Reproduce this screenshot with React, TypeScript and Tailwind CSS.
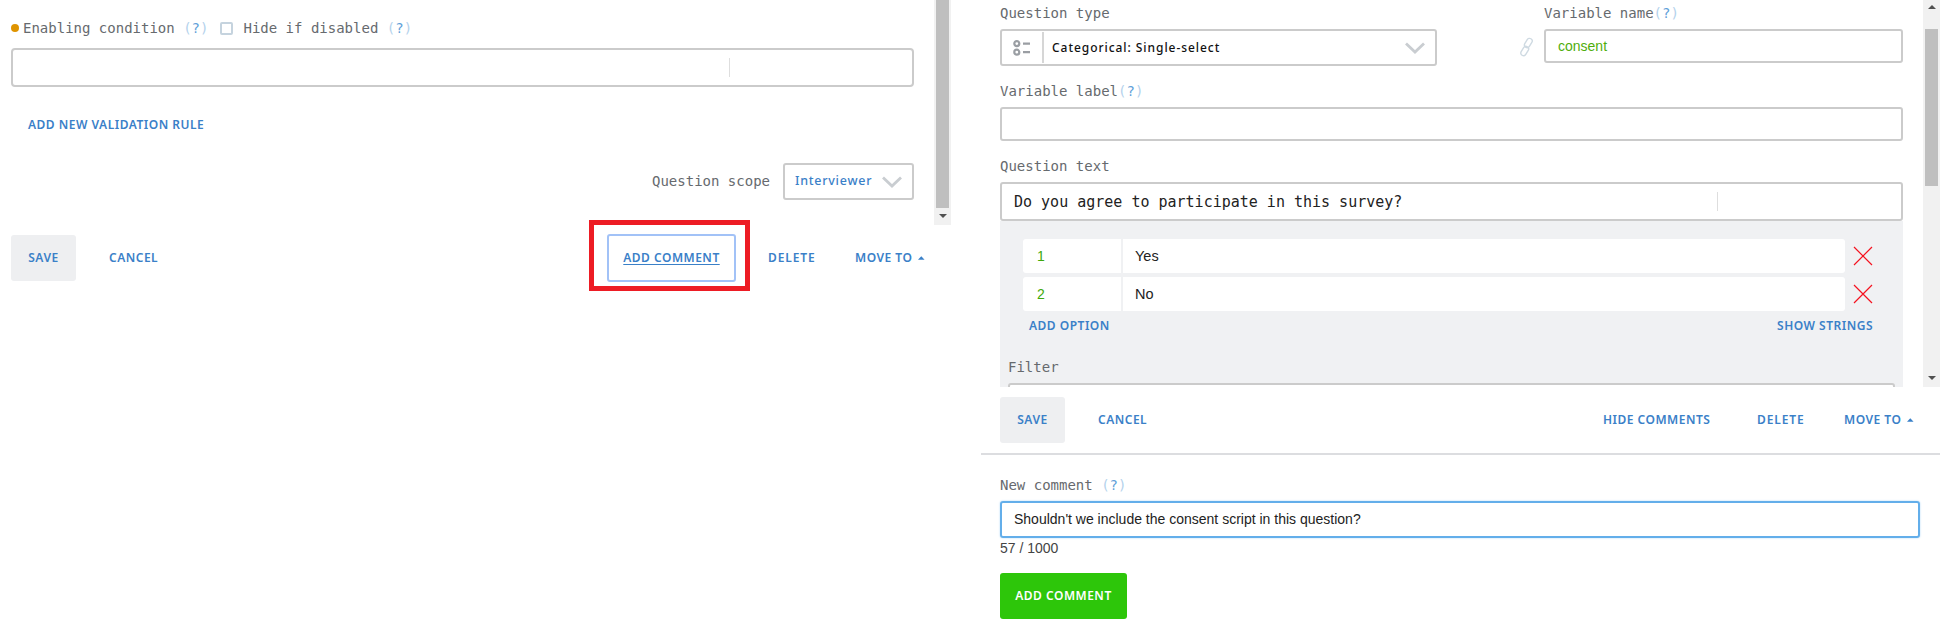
const mono = "font-['DejaVu_Sans_Mono','Liberation_Mono',monospace]";
const btnFont = "font-['Noto_Sans','Open_Sans',sans-serif]";
const arial = "font-['Liberation_Sans',Arial,sans-serif]";

function Help({ className = "" }: { className?: string }) {
  return <span className={`text-[#b4d2ec] ${className}`}>(<span className="text-[#5f9fd9]">?</span>)</span>;
}

function Label({ children, className = "" }: { children: React.ReactNode; className?: string }) {
  return <div className={`${mono} text-[14px] leading-[18px] text-[#666a6e] whitespace-pre ${className}`}>{children}</div>;
}

function TextBtn({ children, className = "" }: { children: React.ReactNode; className?: string }) {
  return <span className={`${btnFont} text-[12px] leading-[16px] font-semibold tracking-[0.5px] text-[#3a80c8] whitespace-nowrap ${className}`}>{children}</span>;
}

function Chevron() {
  return (
    <svg width="20" height="12" viewBox="0 0 20 12" fill="none" className="shrink-0">
      <path d="M1 1.5 L10 10 L19 1.5" stroke="#c9cdd1" strokeWidth="2.8" />
    </svg>
  );
}

function MoveTo() {
  return (
    <span className="flex items-center gap-[6px]">
      <TextBtn>MOVE TO</TextBtn>
      <svg width="8" height="4" viewBox="0 0 8 4"><path d="M0 4 L4 0 L8 4 Z" fill="#3a80c8" /></svg>
    </span>
  );
}

function SaveBtn() {
  return (
    <div className="w-[65px] h-[46px] rounded-[3px] bg-[#eeeff1] flex items-center justify-center">
      <TextBtn>SAVE</TextBtn>
    </div>
  );
}

function RedX() {
  return (
    <svg width="20" height="20" viewBox="0 0 20 20" className="shrink-0">
      <path d="M1 1 L19 19 M19 1 L1 19" stroke="#f5121f" strokeWidth="1.2" />
    </svg>
  );
}

function OptionRow({ n, text }: { n: string; text: string }) {
  return (
    <div className="flex items-center">
      <div className="w-[822px] h-[34px] bg-white rounded-[3px] flex items-center">
        <div className={`${arial} w-[100px] h-full pl-[14px] border-r-2 border-[#f0f1f3] flex items-center text-[14px] text-[#3fa90a]`}>{n}</div>
        <div className={`${arial} pl-[12px] pt-[1px] text-[14.5px] text-[#222]`}>{text}</div>
      </div>
      <div className="ml-[8px]"><RedX /></div>
    </div>
  );
}

function Scrollbar({ thumbH, showTop }: { thumbH: number; showTop: boolean }) {
  return (
    <div className="w-[17px] shrink-0 h-full bg-[#f1f1f1] flex flex-col items-center relative">
      {showTop && (
        <svg width="8" height="4" viewBox="0 0 8 4" className="absolute top-[5px]"><path d="M0 4 L4 0 L8 4 Z" fill="#505050" /></svg>
      )}
      <div className="w-[13px] bg-[#bfbfbf]" style={{ marginTop: showTop ? 29 : 0, height: thumbH }} />
      <svg width="8" height="4" viewBox="0 0 8 4" className="absolute bottom-[7px]"><path d="M0 0 L8 0 L4 4 Z" fill="#505050" /></svg>
    </div>
  );
}

export default function App() {
  return (
    <div className="w-[1955px] h-[639px] bg-white flex overflow-hidden">
      {/* Left pane */}
      <div className="w-[981px] shrink-0">
        <div className="w-[952px] h-[225px] flex overflow-hidden">
          <div className="w-[934px] pl-[11px] pr-[20px] shrink-0">
            <div className="flex items-center mt-[19px] h-[18px]">
              <span className="w-[8px] h-[8px] rounded-full bg-[#df9400] shrink-0 mr-[4px]" />
              <Label>Enabling condition <Help /></Label>
              <span className="w-[13px] h-[13px] border-2 border-[#c5d3de] rounded-[2px] ml-[12px] mr-[10px] shrink-0" />
              <Label>Hide if disabled <Help /></Label>
            </div>
            <div className="mt-[11px] h-[39px] border-2 border-[#cbcbcb] rounded-[4px] relative flex items-center">
              <div className="ml-[716px] w-px h-[19px] bg-[#dedede]" />
            </div>
            <div className="mt-[30px] pl-[17px] h-[16px] flex items-center">
              <TextBtn>ADD NEW VALIDATION RULE</TextBtn>
            </div>
            <div className="mt-[30px] flex items-center justify-end">
              <Label className="mr-[13px] -mt-[1px]">Question scope</Label>
              <div className="w-[131px] h-[37px] border-2 border-[#cbcbcb] rounded-[3px] flex items-center justify-between pl-[10px] pr-[10px]">
                <span className={`${btnFont} text-[12.5px] tracking-[0.75px] font-medium text-[#3a80c8]`}>Interviewer</span>
                <Chevron />
              </div>
            </div>
          </div>
          <Scrollbar thumbH={208} showTop={false} />
        </div>
        <div className="mt-[9px] w-[914px] ml-[11px] flex items-center">
          <SaveBtn />
          <TextBtn className="ml-[33px]">CANCEL</TextBtn>
          <div className="ml-auto flex items-center">
            <div className="relative w-[129px] h-[48px] border-2 border-[#a2c2f7] rounded-[3px] flex items-center justify-center">
              <TextBtn className="text-[#2c4f72] underline underline-offset-2">ADD COMMENT</TextBtn>
              <div className="absolute left-[-20px] top-[-16px] w-[161px] h-[71px] border-[5px] border-[#ed1c24]" />
            </div>
            <div className="ml-[32px] w-[48px] flex"><TextBtn className="tracking-[0.9px]">DELETE</TextBtn></div>
            <div className="ml-[39px] w-[70px]"><MoveTo /></div>
          </div>
        </div>
      </div>

      {/* Right pane */}
      <div className="w-[959px] shrink-0">
        <div className="h-[387px] flex overflow-hidden">
          <div className="w-[942px] shrink-0 pl-[19px] pr-[20px] overflow-hidden">
            <div className="flex">
              <div className="w-[437px]">
                <Label className="mt-[4px]">Question type</Label>
                <div className="mt-[7px] h-[37px] border-2 border-[#cbcbcb] rounded-[3px] flex items-center">
                  <div className="w-[42px] h-[31px] border-r-2 border-[#d6d6d6] flex items-center justify-center">
                    <svg width="18" height="16" viewBox="0 0 18 16" fill="none">
                      <circle cx="3.8" cy="3.6" r="2.5" stroke="#9a9ea3" strokeWidth="2.2" />
                      <circle cx="3.8" cy="12.2" r="2.5" stroke="#9a9ea3" strokeWidth="2.2" />
                      <path d="M10 3.6 H17 M10 12.2 H17" stroke="#9a9ea3" strokeWidth="2.2" />
                    </svg>
                  </div>
                  <span className={`${btnFont} ml-[8px] text-[12px] font-medium tracking-[0.95px] text-[#111]`}>Categorical: Single-select</span>
                  <div className="ml-auto mr-[10px]"><Chevron /></div>
                </div>
              </div>
              <div className="ml-[82px] w-[15px] mt-[37px] shrink-0">
                <svg width="15" height="20" viewBox="0 0 15 20" fill="none" stroke="#cfdae2" strokeWidth="1.4">
                  <rect x="6.6" y="1" width="5.4" height="10" rx="2.7" transform="rotate(32 9.3 6)" />
                  <rect x="3" y="9" width="5.4" height="10" rx="2.7" transform="rotate(32 5.7 14)" />
                </svg>
              </div>
              <div className="ml-[10px] w-[359px]">
                <Label className="mt-[4px]">Variable name<Help /></Label>
                <div className="mt-[7px] h-[34px] border-2 border-[#cbcbcb] rounded-[3px] flex items-center pl-[12px]">
                  <span className={`${arial} text-[14px] text-[#4fae0c]`}>consent</span>
                </div>
              </div>
            </div>
            <Label className="mt-[16px]">Variable label<Help /></Label>
            <div className="mt-[7px] h-[34px] border-2 border-[#cbcbcb] rounded-[3px]" />
            <Label className="mt-[16px]">Question text</Label>
            <div className="mt-[7px] h-[39px] border-2 border-[#cbcbcb] rounded-[3px] flex items-center pl-[12px]">
              <span className={`${mono} pt-[1px] text-[15px] text-[#222] whitespace-pre`}>Do you agree to participate in this survey?</span>
              <div className="ml-auto mr-[183px] w-px h-[19px] bg-[#dedede]" />
            </div>
            <div className="h-[166px] bg-[#f0f1f3] overflow-hidden">
              <div className="pt-[18px] pl-[23px] flex flex-col gap-[4px]">
                <OptionRow n="1" text="Yes" />
                <OptionRow n="2" text="No" />
              </div>
              <div className="mt-[7px] pl-[29px] pr-[30px] flex justify-between">
                <TextBtn>ADD OPTION</TextBtn>
                <TextBtn>SHOW STRINGS</TextBtn>
              </div>
              <Label className="mt-[24px] ml-[8px]">Filter</Label>
              <div className="mt-[7px] mx-[8px] h-[39px] border-2 border-[#cbcbcb] rounded-[3px] bg-white" />
            </div>
          </div>
          <Scrollbar thumbH={157} showTop />
        </div>

        <div className="mt-[10px] ml-[19px] w-[903px] flex items-center">
          <SaveBtn />
          <TextBtn className="ml-[33px]">CANCEL</TextBtn>
          <div className="ml-auto flex items-center">
            <div className="w-[104px] flex"><TextBtn>HIDE COMMENTS</TextBtn></div>
            <div className="ml-[50px] w-[48px] flex"><TextBtn className="tracking-[0.9px]">DELETE</TextBtn></div>
            <div className="ml-[39px] w-[70px] -mr-[11px]"><MoveTo /></div>
          </div>
        </div>
        <div className="mt-[10px] h-[2px] bg-[#dcdde0]" />
        <div className="pl-[19px]">
          <Label className="mt-[21px]">New comment <Help /></Label>
          <div className="mt-[7px] w-[920px] h-[37px] border-2 border-[#63aeea] rounded-[3px] flex items-center pl-[12px] shadow-[0_0_2px_#a8d4f5]">
            <span className={`${arial} text-[14px] text-[#222]`}>Shouldn't we include the consent script in this question?</span>
          </div>
          <div className={`${arial} mt-[1px] text-[14px] leading-[18px] text-[#444]`}>57 / 1000</div>
          <div className="mt-[16px] w-[127px] h-[46px] rounded-[3px] bg-[#2dc60a] flex items-center justify-center">
            <TextBtn className="text-white">ADD COMMENT</TextBtn>
          </div>
        </div>
      </div>
    </div>
  );
}
